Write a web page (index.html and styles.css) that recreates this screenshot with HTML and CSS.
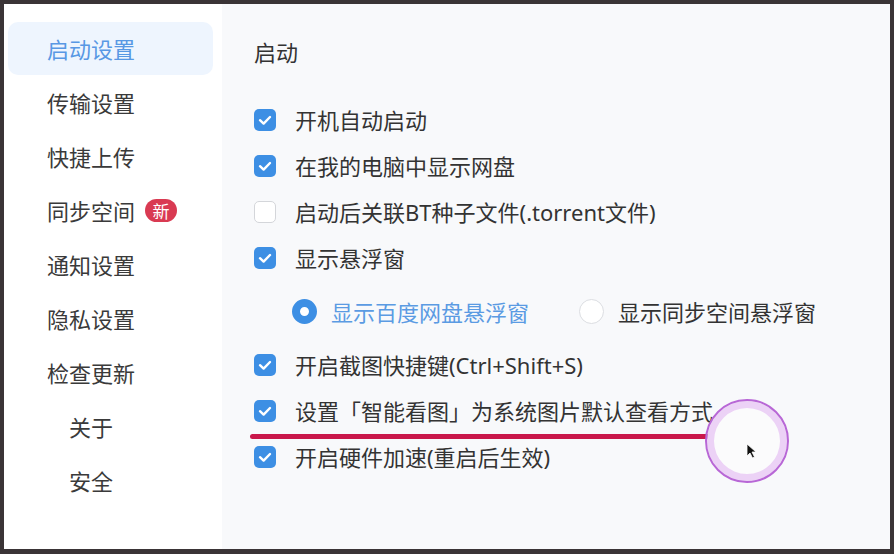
FILE: index.html
```html
<!DOCTYPE html>
<html lang="zh-CN">
<head>
  <meta charset="UTF-8">
  <title>设置 - 启动设置</title>
  <link rel="stylesheet" href="styles.css">
</head>
<body>
  <div class="window">
    <!-- Sidebar -->
    <nav class="sidebar">
      <div class="nav-item active">启动设置</div>
      <div class="nav-item">传输设置</div>
      <div class="nav-item">快捷上传</div>
      <div class="nav-item">同步空间 <span class="badge">新</span></div>
      <div class="nav-item">通知设置</div>
      <div class="nav-item">隐私设置</div>
      <div class="nav-item">检查更新</div>
      <div class="nav-item sub">关于</div>
      <div class="nav-item sub">安全</div>
    </nav>

    <!-- Settings -->
    <main class="content">
      <h2 class="section-title">启动</h2>
      <div class="option"><span class="check on"></span>开机自动启动</div>
      <div class="option"><span class="check on"></span>在我的电脑中显示网盘</div>
      <div class="option"><span class="check"></span>启动后关联BT种子文件(.torrent文件)</div>
      <div class="option"><span class="check on"></span>显示悬浮窗</div>
      <div class="radio-row">
        <div class="radio-option selected"><span class="radio"></span>显示百度网盘悬浮窗</div>
        <div class="radio-option"><span class="radio"></span>显示同步空间悬浮窗</div>
      </div>
      <div class="option"><span class="check on"></span>开启截图快捷键(Ctrl+Shift+S)</div>
      <div class="option"><span class="check on"></span>设置「智能看图」为系统图片默认查看方式</div>
      <div class="option"><span class="check on"></span>开启硬件加速(重启后生效)</div>

      <!-- annotation drawn over the recording -->
      <div class="mark-line"></div>
      <div class="click-ring">
        <svg class="cursor" width="12" height="16" viewBox="0 0 12 16">
          <path d="M1 1 L1 13 L4 10 L6.5 15 L8.5 14 L6 9 L10 9 Z" fill="#111" stroke="#fff" stroke-width="0.8"/>
        </svg>
      </div>
    </main>
  </div>
</body>
</html>
```

FILE: styles.css
```css
* {
  margin: 0;
  padding: 0;
  box-sizing: border-box;
}

body {
  width: 894px;
  height: 554px;
  overflow: hidden;
  font-family: "Noto Sans", "Noto Sans CJK SC", sans-serif;
  color: #333;
  background: #3a3436;
}

.window {
  display: flex;
  height: 554px;
  border-style: solid;
  border-color: #3a3436;
  border-width: 4px 4px 5px 4px;
}

/* Sidebar */
.sidebar {
  width: 218px;
  background: #fff;
  padding-top: 18px;
}

.nav-item {
  display: flex;
  align-items: center;
  height: 54px;
  margin: 0 9px 0 4px;
  padding-left: 39px;
  padding-bottom: 2px;
  font-size: 22px;
  color: #3a3a3a;
  border-radius: 10px;
}

.nav-item.active {
  height: 53px;
  margin-bottom: 1px;
  background: #eef5fe;
  color: #5898e4;
}

.nav-item.sub {
  padding-left: 61px;
}

.badge {
  display: inline-flex;
  align-items: center;
  justify-content: center;
  width: 32px;
  height: 23px;
  margin-left: 10px;
  border-radius: 12px;
  background: #d93a52;
  color: #fff;
  font-size: 17px;
}

/* Content */
.content {
  position: relative;
  flex: 1;
  background: #f8f9fb;
  padding: 33px 0 0 32px;
}

.section-title {
  font-size: 22px;
  font-weight: normal;
  line-height: 30px;
  margin-bottom: 29px;
  color: #333;
}

.option {
  display: flex;
  align-items: center;
  height: 46px;
  font-size: 22px;
  color: #333;
}

.check {
  width: 22px;
  height: 22px;
  margin-right: 19px;
  margin-top: 2px;
  border-radius: 5px;
  border: 1.5px solid #d4d6da;
  background: #fff;
  flex-shrink: 0;
}

.check.on {
  border: none;
  background: #3d8fe4 url("data:image/svg+xml,%3Csvg xmlns='http://www.w3.org/2000/svg' viewBox='0 0 22 22'%3E%3Cpath d='M6 11.2 L9.6 14.6 L16 8' fill='none' stroke='%23fff' stroke-width='2.4' stroke-linecap='round' stroke-linejoin='round'/%3E%3C/svg%3E") center / 22px 22px no-repeat;
}

.radio-row {
  display: flex;
  align-items: center;
  height: 61px;
  padding-left: 38px;
  gap: 50px;
}

.radio-option {
  display: flex;
  align-items: center;
  font-size: 22px;
  color: #333;
}

.radio-option.selected {
  color: #5b9be3;
}

.radio {
  width: 25px;
  height: 25px;
  margin-right: 14px;
  margin-top: 2px;
  border-radius: 50%;
  border: 1.5px solid #dcdee2;
  background: #fff;
}

.radio-option.selected .radio {
  border: 8px solid #3d8fe4;
}

/* Annotation overlay */
.mark-line {
  position: absolute;
  left: 28px;
  top: 430px;
  width: 462px;
  height: 5px;
  border-radius: 3px;
  background: #c9174b;
}

.click-ring {
  position: absolute;
  left: 483px;
  top: 395px;
  width: 84px;
  height: 84px;
  border-radius: 50%;
  border: 2px solid #b867d6;
  box-shadow: inset 0 0 0 7px #ecd2f6;
  background: rgba(255, 255, 255, 0.4);
}

.cursor {
  position: absolute;
  left: 39px;
  top: 42px;
}
```
